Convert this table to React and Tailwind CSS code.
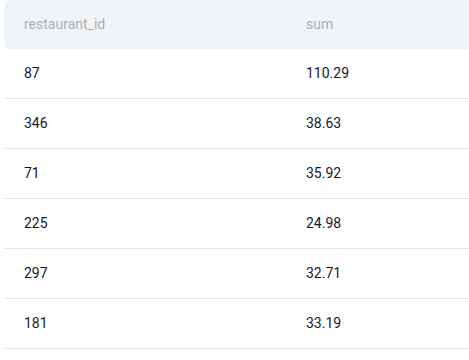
import React from 'react';

const rows = [
  ['87', '110.29'],
  ['346', '38.63'],
  ['71', '35.92'],
  ['225', '24.98'],
  ['297', '32.71'],
  ['181', '33.19'],
];

export default function App() {
  return (
    <div className="w-[469px] h-[360px] overflow-hidden bg-white font-['Roboto',sans-serif] text-[14px]">
      <div className="ml-1 w-[490px]">
        <div className="flex h-[49px] items-center rounded-l-md bg-[#f1f4f7] text-[#a6b0c0]">
          <div className="w-[282px] pl-5">restaurant_id</div>
          <div className="pl-5">sum</div>
        </div>
        {rows.map(([id, sum]) => (
          <div key={id} className="flex h-[50px] items-center border-b border-[#e3e8ef] text-[#16192c]">
            <div className="w-[282px] pl-5">{id}</div>
            <div className="pl-5">{sum}</div>
          </div>
        ))}
      </div>
    </div>
  );
}
